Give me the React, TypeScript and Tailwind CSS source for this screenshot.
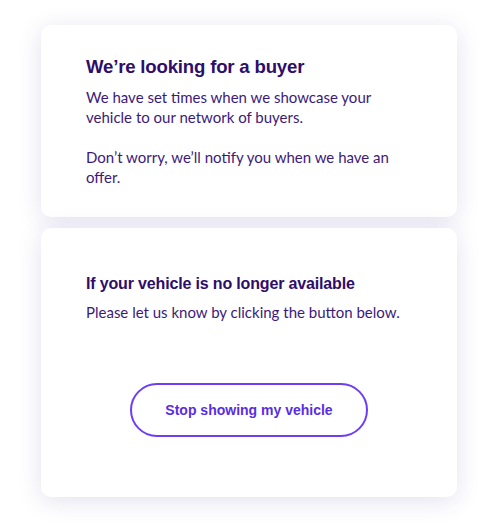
export default function App() {
  return (
    <div className="min-h-[523px] w-full bg-white px-[41px] pt-[25px] font-['Lato',sans-serif]">
      <div className="flex w-[416px] flex-col gap-[11px]">
        {/* Status card */}
        <div className="rounded-[10px] bg-white px-[45px] pt-[30px] pb-[30px] shadow-[0_4px_24px_rgba(60,40,140,0.14)]">
          <h2 className="font-['Liberation_Sans',sans-serif] text-[18.6px] leading-[24px] font-bold tracking-[-0.01em] text-[#2e0d6b]">
            We’re looking for a buyer
          </h2>
          <div className="mt-[8px] text-[15px] leading-[20px] text-[#3c1a7a]">
            <p>We have set times when we showcase your vehicle to our network of buyers.</p>
            <p className="mt-[20px]">Don’t worry, we’ll notify you when we have an offer.</p>
          </div>
        </div>

        {/* Withdraw card */}
        <div className="flex flex-col rounded-[10px] bg-white px-[45px] pt-[45px] pb-[60px] shadow-[0_4px_24px_rgba(60,40,140,0.14)]">
          <h3 className="font-['Liberation_Sans',sans-serif] text-[16px] leading-[22px] font-bold tracking-[-0.01em] text-[#2e0d6b]">
            If your vehicle is no longer available
          </h3>
          <p className="mt-[7px] text-[15px] leading-[20px] text-[#3c1a7a]">
            Please let us know by clicking the button below.
          </p>
          <button className="mt-[61px] h-[54px] w-[238px] self-center rounded-full border-2 border-[#6d3ef5] font-['Liberation_Sans',sans-serif] text-[14px] font-bold text-[#5a2de0]">
            Stop showing my vehicle
          </button>
        </div>
      </div>
    </div>
  );
}
